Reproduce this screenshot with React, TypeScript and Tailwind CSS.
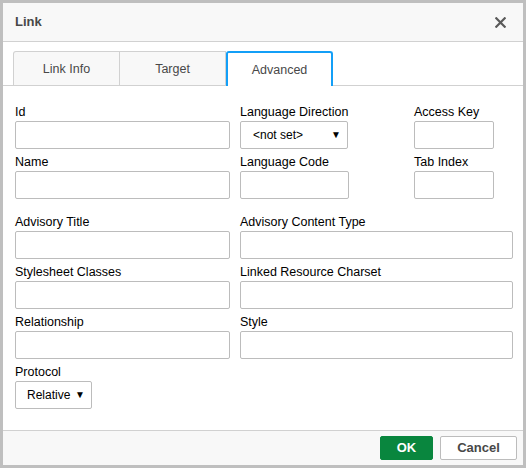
const font = "font-['Liberation_Sans',Arial,sans-serif]";

function Label({ children }: { children: string }) {
  return <div className="h-[16px] text-[12.5px] leading-[16px] text-black whitespace-nowrap">{children}</div>;
}

function TextInput({ w }: { w: string }) {
  return <input type="text" className={`${w} mt-[1px] h-[28px] border border-[#bcbcbc] rounded-[2px] bg-white outline-none block`} />;
}

function Select({ w, value, pl }: { w: string; value: string; pl: string }) {
  return (
    <div className={`${w} ${pl} mt-[1px] h-[28px] border border-[#bcbcbc] rounded-[2px] bg-white flex items-center justify-between pr-[6px] text-[12px] text-black`}>
      <span>{value}</span>
      <span className="text-[10px] leading-none">▼</span>
    </div>
  );
}

function Field({ label, children }: { label: string; children: React.ReactNode }) {
  return (
    <div className="flex flex-col">
      <Label>{label}</Label>
      {children}
    </div>
  );
}

export default function App() {
  const tabs = ["Link Info", "Target", "Advanced"];
  return (
    <div className={`${font} w-[526px] h-[468px] bg-[#bfbfbf] p-[3px]`}>
      <div className="w-full h-[462px] bg-white flex flex-col">
        {/* title bar */}
        <div className="h-[39px] shrink-0 bg-[#f8f8f8] border-b border-[#d1d1d1] flex items-center justify-between pl-[12px] pr-[17px]">
          <span className="text-[13px] font-bold text-[#484848]">Link</span>
          <svg width="11" height="11" viewBox="0 0 11 11" className="mt-[1px]">
            <path d="M1.3 1.3 L9.7 9.7 M9.7 1.3 L1.3 9.7" stroke="#5a5a5a" strokeWidth="2.2" strokeLinecap="square" />
          </svg>
        </div>

        {/* tabs */}
        <div className="pt-[9px] pl-[10px] border-b border-[#d1d1d1] flex shrink-0">
          {tabs.map((t, i) =>
            i === 2 ? (
              <div
                key={t}
                className="w-[107px] h-[35px] -mb-[1px] pt-[1px] bg-white border-2 border-b-0 border-[#139ff7] rounded-t-[3px] flex items-center justify-center text-[12.5px] text-[#484848]"
              >
                {t}
              </div>
            ) : (
              <div
                key={t}
                className={`h-[34px] pt-[1px] bg-[#f8f8f8] border border-b-0 border-[#d1d1d1] ${i === 1 ? "border-l-0 w-[106px]" : "w-[107px] rounded-tl-[3px]"} flex items-center justify-center text-[12.5px] text-[#484848]`}
              >
                {t}
              </div>
            )
          )}
        </div>

        {/* body */}
        <div className="flex-1 pl-[12px] pt-[18px]">
          <div className="flex flex-col gap-[5px]">
            <div className="flex">
              <div className="w-[215px]"><Field label="Id"><TextInput w="w-[215px]" /></Field></div>
              <div className="ml-[10px] w-[109px]"><Field label="Language Direction"><Select w="w-[108px]" pl="pl-[12px]" value="<not set>" /></Field></div>
              <div className="ml-[65px] w-[80px]"><Field label="Access Key"><TextInput w="w-[80px]" /></Field></div>
            </div>
            <div className="flex">
              <div className="w-[215px]"><Field label="Name"><TextInput w="w-[215px]" /></Field></div>
              <div className="ml-[10px] w-[109px]"><Field label="Language Code"><TextInput w="w-[109px]" /></Field></div>
              <div className="ml-[65px] w-[80px]"><Field label="Tab Index"><TextInput w="w-[80px]" /></Field></div>
            </div>
          </div>

          <div className="mt-[15px] flex flex-col gap-[5px]">
            {[
              ["Advisory Title", "Advisory Content Type"],
              ["Stylesheet Classes", "Linked Resource Charset"],
              ["Relationship", "Style"],
            ].map(([a, b]) => (
              <div key={a} className="flex">
                <div className="w-[215px]"><Field label={a}><TextInput w="w-[215px]" /></Field></div>
                <div className="ml-[10px]"><Field label={b}><TextInput w="w-[273px]" /></Field></div>
              </div>
            ))}
            <Field label="Protocol"><Select w="w-[77px]" pl="pl-[11px]" value="Relative" /></Field>
          </div>
        </div>

        {/* footer */}
        <div className="h-[35px] shrink-0 bg-[#f8f8f8] border-t border-[#d1d1d1] flex items-start justify-end gap-[7px] pt-[5px] pr-[6px]">
          <button className="w-[53px] h-[24px] bg-[#09863e] border border-[#09863e] rounded-[2px] text-white text-[13px] font-bold">OK</button>
          <button className="w-[77px] h-[24px] bg-white border border-[#bcbcbc] rounded-[2px] text-[#484848] text-[13px] font-bold">Cancel</button>
        </div>
      </div>
    </div>
  );
}
